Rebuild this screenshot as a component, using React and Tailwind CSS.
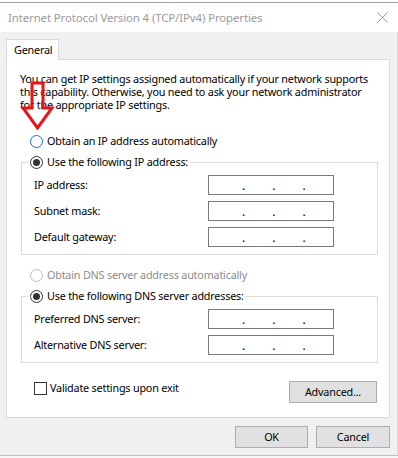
import React from 'react';

const font = { fontFamily: '"Noto Sans", "Liberation Sans", sans-serif' };

function Radio({ checked, hover, disabled }) {
  const border = disabled ? 'border-[#bcbcbc]' : hover ? 'border-[#0078d7]' : 'border-[#333333]';
  return (
    <span className={`w-[13px] h-[13px] rounded-full border ${border} bg-white flex items-center justify-center shrink-0`}>
      {checked && <span className="w-[7px] h-[7px] rounded-full bg-[#333333]" />}
    </span>
  );
}

function IpBox() {
  return (
    <div className="w-[126px] h-[20px] border border-[#7a7a7a] bg-white flex items-end pb-[2px] pl-[3px] text-[12px] leading-[12px] tracking-normal">
      <span className="w-[30px]" />
      <span>.</span>
      <span className="w-[27px]" />
      <span>.</span>
      <span className="w-[27px]" />
      <span>.</span>
    </div>
  );
}

function Row({ label }) {
  return (
    <div className="flex items-center h-[20px]">
      <span className="w-[174px]">{label}</span>
      <IpBox />
    </div>
  );
}

function App() {
  return (
    <div className="relative w-[398px] h-[458px] overflow-hidden bg-[#f0f0f0] text-[10.8px] tracking-[-0.2px] text-black flex flex-col" style={font}>
      {/* remnant of window behind */}
      <div className="h-[2px] bg-white" />
      <div className="h-[1px] bg-[#a0a0a0]" />

      {/* title bar */}
      <div className="h-[29px] bg-white flex items-center justify-between pl-[8px] pr-[10px]">
        <span className="text-[#9a9a9a] text-[11.4px] tracking-[-0.1px]">Internet Protocol Version 4 (TCP/IPv4) Properties</span>
        <svg width="11" height="11" viewBox="0 0 11 11">
          <path d="M0.5 0.5 L10.5 10.5 M10.5 0.5 L0.5 10.5" stroke="#9a9a9a" strokeWidth="1" />
        </svg>
      </div>

      {/* body */}
      <div className="flex-1 flex flex-col pl-[6px] pr-[7px] pt-[7px] border-r border-[#dadada]">
        <div className="relative z-10 w-[53px] h-[21px] bg-white border border-b-0 border-[#d9d9d9] flex items-center pl-[7px]">
          General
        </div>
        <div className="-mt-px h-[359px] bg-white border border-[#d9d9d9] flex flex-col pl-[13px] pr-[11px]">
          <div className="mt-[12px] leading-[13px] whitespace-nowrap h-[39px]">
            <div>You can get IP settings assigned automatically if your network supports</div>
            <div>this capability. Otherwise, you need to ask your network administrator</div>
            <div>for the appropriate IP settings.</div>
          </div>

          <label className="mt-[22px] ml-[10px] flex items-center gap-[4px] h-[16px]">
            <Radio hover />
            <span>Obtain an IP address automatically</span>
          </label>

          <fieldset className="mt-[5px] ml-[1px] w-[357px] border border-[#dcdcdc] pl-[12px] pb-[7px]">
            <legend className="-ml-[6px] px-[2px] flex items-center gap-[4px] h-[16px]">
              <Radio checked />
              <span>Use the following IP address:</span>
            </legend>
            <div className="mt-[5px] flex flex-col gap-[6px]">
              <Row label="IP address:" />
              <Row label="Subnet mask:" />
              <Row label="Default gateway:" />
            </div>
          </fieldset>

          <label className="mt-[12px] ml-[10px] flex items-center gap-[4px] h-[16px] text-[#8c8c8c]">
            <Radio disabled />
            <span>Obtain DNS server address automatically</span>
          </label>

          <fieldset className="mt-[5px] ml-[1px] w-[357px] border border-[#dcdcdc] pl-[12px] pb-[7px]">
            <legend className="-ml-[6px] px-[2px] flex items-center gap-[4px] h-[16px]">
              <Radio checked />
              <span>Use the following DNS server addresses:</span>
            </legend>
            <div className="mt-[5px] flex flex-col gap-[6px]">
              <Row label="Preferred DNS server:" />
              <Row label="Alternative DNS server:" />
            </div>
          </fieldset>

          <div className="mt-[18px] flex items-start justify-between">
            <label className="ml-[14px] flex items-center gap-[3px] h-[14px]">
              <span className="w-[13px] h-[13px] border border-[#333333] bg-white" />
              <span>Validate settings upon exit</span>
            </label>
            <button className="w-[88px] h-[22px] bg-[#e1e1e1] border border-[#adadad] mr-[1px]">Advanced...</button>
          </div>
        </div>

        <div className="mt-[8px] flex justify-end gap-[8px]">
          <button className="w-[73px] h-[22px] bg-[#e1e1e1] border border-[#adadad]">OK</button>
          <button className="w-[74px] h-[22px] bg-[#e1e1e1] border border-[#adadad]">Cancel</button>
        </div>
      </div>
      <div className="h-[1px] bg-[#bdbdbd]" />
      <div className="h-[2px] bg-[#f7f7f7]" />

      {/* red arrow annotation */}
      <svg className="absolute left-0 top-0 pointer-events-none" width="398" height="458">
        <polygon
          points="32,83 43,83 43,108 52,108 37.5,128 23,108 32,108"
          fill="none"
          stroke="#e8141b"
          strokeWidth="3"
          strokeLinejoin="miter"
        />
      </svg>
    </div>
  );
}

export default App;
